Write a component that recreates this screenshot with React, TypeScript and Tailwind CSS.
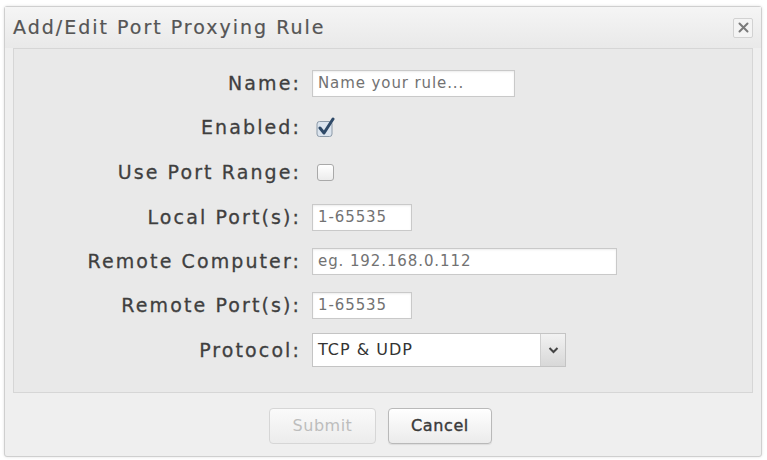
import React from "react";

const font = { fontFamily: '"DejaVu Sans", "Liberation Sans", sans-serif' };

function Label({ children, h = "h-[44px]" }: { children: React.ReactNode; h?: string }) {
  return (
    <div className={`flex ${h} items-center justify-end text-[19px] tracking-[2.1px] text-[#3f3f3f] [-webkit-text-stroke:0.3px_#3f3f3f]`}>
      {children}
    </div>
  );
}

function TextInput({ w, placeholder, h = "h-[44px]" }: { w: string; placeholder: string; h?: string }) {
  return (
    <div className={`flex ${h} items-center`}>
      <div
        className={`${w} flex h-[27px] items-center border border-[#c9c9c9] bg-white pl-[5px] text-[15px] tracking-[0.9px] text-[#727272] shadow-[inset_0_1px_2px_rgba(0,0,0,0.08)]`}
      >
        {placeholder}
      </div>
    </div>
  );
}

export default function App() {
  return (
    <div className="h-[460px] w-[767px] bg-white pl-[4px] pt-[6px]" style={font}>
      <div className="flex h-[451px] w-[758px] flex-col rounded-[3px] border border-[#cfcfcf] bg-[#efefef] shadow-[0_0_3px_rgba(0,0,0,0.12)]">
        {/* Title bar */}
        <div className="flex h-[41px] items-center justify-between bg-gradient-to-b from-[#f5f5f5] to-[#e9e9e9] pl-[8px] pr-[8px]">
          <div className="text-[19px] tracking-[2px] text-[#555555] [-webkit-text-stroke:0.2px_#555555]">Add/Edit Port Proxying Rule</div>
          <div className="flex h-[20px] w-[20px] items-center justify-center rounded-[2px] border border-[#d2d2d2] bg-[#f4f4f4]">
            <svg width="11" height="11" viewBox="0 0 11 11">
              <path d="M1.5 1.5 L9.5 9.5 M9.5 1.5 L1.5 9.5" stroke="#7a7a7a" strokeWidth="2" strokeLinecap="round" />
            </svg>
          </div>
        </div>
        {/* Content panel */}
        <div className="mx-[8px] h-[345px] border border-[#d6d6d6] bg-[#e9e9e9] pt-[12px]">
          <div className="grid grid-cols-[287px_1fr] gap-x-[11px]">
            <Label>Name:</Label>
            <TextInput w="w-[203px]" placeholder="Name your rule..." />

            <Label h="h-[45px]">Enabled:</Label>
            <div className="flex h-[45px] items-center pl-[4px]">
              <svg width="22" height="22" viewBox="0 0 22 22">
                <rect x="1" y="4.5" width="15" height="15" rx="2.5" fill="#dbe4ee" stroke="#8c9aa8" strokeWidth="1" />
                <path d="M4 11 L8 16 L17 2" fill="none" stroke="#2f4a68" strokeWidth="3" strokeLinecap="round" strokeLinejoin="round" />
              </svg>
            </div>

            <Label h="h-[45px]">Use Port Range:</Label>
            <div className="flex h-[45px] items-center pl-[5px]">
              <div className="h-[17px] w-[17px] rounded-[3px] border border-[#a9a9a9] bg-gradient-to-b from-white to-[#ececec]" />
            </div>

            <Label>Local Port(s):</Label>
            <TextInput w="w-[100px]" placeholder="1-65535" />

            <Label>Remote Computer:</Label>
            <TextInput w="w-[305px]" placeholder="eg. 192.168.0.112" />

            <Label>Remote Port(s):</Label>
            <TextInput w="w-[100px]" placeholder="1-65535" />

            <Label h="h-[46px]">Protocol:</Label>
            <div className="flex h-[46px] items-center">
              <div className="flex h-[34px] w-[254px] items-stretch border border-[#c4c4c4] bg-white">
                <div className="flex flex-1 items-center pl-[5px] text-[16px] tracking-[1px] text-[#333333]">TCP &amp; UDP</div>
                <div className="flex w-[25px] items-center justify-center border-l border-[#d0d0d0] bg-gradient-to-b from-[#f2f2f2] to-[#d8d8d8]">
                  <svg width="11" height="8" viewBox="0 0 11 8">
                    <path d="M1.5 2 L5.5 6 L9.5 2" fill="none" stroke="#444" strokeWidth="2" />
                  </svg>
                </div>
              </div>
            </div>
          </div>
        </div>
        {/* Footer */}
        <div className="flex flex-1 items-center justify-center gap-[12px] pr-[5px] pt-[3px]">
          <div className="flex h-[36px] w-[107px] items-center justify-center rounded-[4px] border border-[#d6d6d6] bg-gradient-to-b from-[#fafafa] to-[#ececec] text-[16px] tracking-[0.5px] text-[#bdbdbd]">
            Submit
          </div>
          <div className="flex h-[36px] w-[104px] items-center justify-center rounded-[4px] border border-[#b9b9b9] bg-gradient-to-b from-white to-[#ebebeb] text-[16px] tracking-[0.6px] text-[#3a3a3a] shadow-[0_1px_1px_rgba(0,0,0,0.08)] [-webkit-text-stroke:0.4px_#3a3a3a]">
            Cancel
          </div>
        </div>
      </div>
    </div>
  );
}
